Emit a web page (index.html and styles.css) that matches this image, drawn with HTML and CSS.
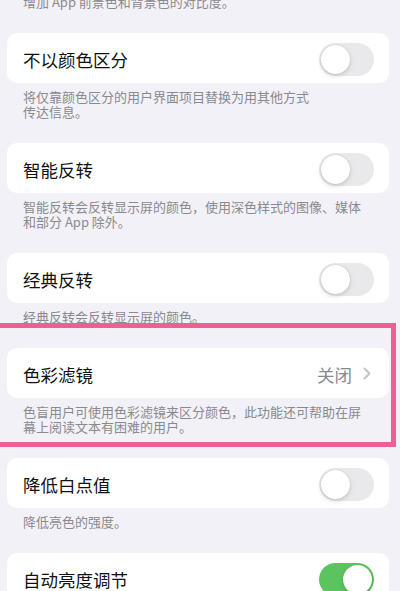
FILE: index.html
```html
<!DOCTYPE html>
<html lang="zh-CN">
<head>
    <meta charset="UTF-8">
    <meta name="viewport" content="width=device-width, initial-scale=1.0">
    <title>显示与文字大小</title>
    <link rel="stylesheet" href="styles.css">
</head>
<body>
    <div class="settings">
        <div class="note note-top">增加 App 前景色和背景色的对比度。</div>

        <div class="cell">
            <span class="cell-title">不以颜色区分</span>
            <span class="switch"></span>
        </div>
        <div class="note">将仅靠颜色区分的用户界面项目替换为用其他方式<br>传达信息。</div>

        <div class="cell">
            <span class="cell-title">智能反转</span>
            <span class="switch"></span>
        </div>
        <div class="note">智能反转会反转显示屏的颜色，使用深色样式的图像、媒体<br>和部分 App 除外。</div>

        <div class="cell">
            <span class="cell-title">经典反转</span>
            <span class="switch"></span>
        </div>
        <div class="note">经典反转会反转显示屏的颜色。</div>

        <div class="cell">
            <span class="cell-title">色彩滤镜</span>
            <span class="cell-value">关闭
                <svg class="chevron" width="8" height="13" viewBox="0 0 8 13">
                    <path d="M1.5 1.5 L6.5 6.5 L1.5 11.5" fill="none" stroke="#c4c4c7" stroke-width="2" stroke-linecap="round" stroke-linejoin="round"/>
                </svg>
            </span>
        </div>
        <div class="note">色盲用户可使用色彩滤镜来区分颜色，此功能还可帮助在屏<br>幕上阅读文本有困难的用户。</div>

        <div class="cell">
            <span class="cell-title">降低白点值</span>
            <span class="switch"></span>
        </div>
        <div class="note">降低亮色的强度。</div>

        <div class="cell">
            <span class="cell-title">自动亮度调节</span>
            <span class="switch on"></span>
        </div>

        <!-- annotation frame around the colour filter row -->
        <div class="highlight"></div>
    </div>
</body>
</html>
```

FILE: styles.css
```css
body {
    margin: 0;
    background-color: #f2f1f7;
    font-family: "Noto Sans CJK SC", "Noto Sans", sans-serif;
    overflow: hidden;
}
.settings {
    position: relative;
    margin-top: -6px;
}
.note {
    margin: 0 11px 24px 7px;
    padding: 6px 16px 0;
    font-size: 13px;
    line-height: 15px;
    color: #8a8a8e;
}
.note-top {
    padding-top: 0;
}
.cell {
    margin: 0 11px 0 7px;
    height: 50px;
    padding: 0 15px 0 16px;
    background: white;
    border-radius: 10px;
    display: flex;
    align-items: center;
    justify-content: space-between;
}
.cell-title {
    font-size: 17.5px;
    color: #111;
    padding-top: 3px;
}
.cell-value {
    display: flex;
    align-items: center;
    gap: 11px;
    font-size: 17.5px;
    color: #8a8a8e;
    padding-top: 3px;
    padding-right: 3px;
}
.chevron {
    margin-top: -2px;
}
.switch {
    position: relative;
    width: 55px;
    height: 33px;
    border-radius: 17px;
    background: #e9e9eb;
    margin-top: 3px;
}
.switch::after {
    content: "";
    position: absolute;
    top: 2px;
    left: 2px;
    width: 29px;
    height: 29px;
    border-radius: 50%;
    background: white;
    box-shadow: 0 2px 5px rgba(0,0,0,0.15), 0 0 1px rgba(0,0,0,0.2);
}
.switch.on {
    background: #5cc45e;
}
.switch.on::after {
    left: 24px;
}
.highlight {
    position: absolute;
    left: -10px;
    top: 329px;
    width: 396px;
    height: 114px;
    border: 5px solid #ee5f94;
    pointer-events: none;
}
```
